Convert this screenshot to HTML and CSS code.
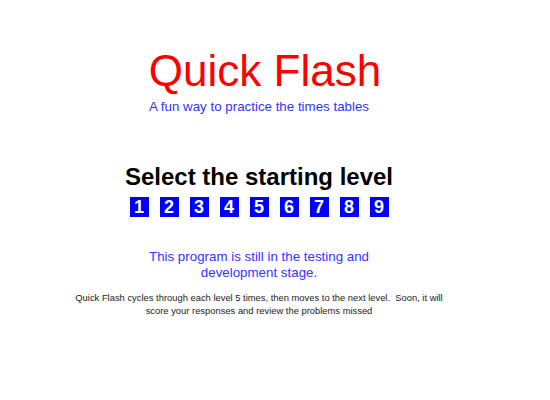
FILE: index.html
```html
<!DOCTYPE html>
<html>
<head>
<meta charset="utf-8">
<link rel="stylesheet" href="styles.css">
</head>
<body>
<div class="page">
  <h1 class="title">Quick Flash</h1>
  <p class="subtitle">A fun way to practice the times tables</p>
  <h2 class="select">Select the starting level</h2>
  <div class="levels">
    <span class="level">1</span>
    <span class="level">2</span>
    <span class="level">3</span>
    <span class="level">4</span>
    <span class="level">5</span>
    <span class="level">6</span>
    <span class="level">7</span>
    <span class="level">8</span>
    <span class="level">9</span>
  </div>
  <p class="notice">This program is still in the testing and development stage.</p>
  <p class="info">Quick Flash cycles through each level 5 times, then moves to the next level.&nbsp; Soon, it will score your responses and review the problems missed</p>
</div>
</body>
</html>
```
FILE: styles.css
```css
html, body {
  margin: 0;
  padding: 0;
  background: #ffffff;
}
.page {
  width: 518px;
  display: flex;
  flex-direction: column;
  align-items: center;
  text-align: center;
  font-family: "Liberation Sans", Arial, sans-serif;
  padding-top: 46px;
}
.title {
  margin: 0;
  padding-left: 12px;
  font-size: 44px;
  font-weight: normal;
  line-height: 50px;
  color: #ff0000;
}
.subtitle {
  margin: 3px 0 0;
  font-size: 13.33px;
  line-height: 16px;
  color: #3333ff;
}
.select {
  margin: 48px 0 0;
  font-size: 24px;
  font-weight: bold;
  line-height: 28px;
  color: #000000;
}
.levels {
  display: flex;
  gap: 11px;
  margin-top: 6px;
}
.level {
  display: block;
  width: 19px;
  height: 20px;
  line-height: 21px;
  background: #0000ff;
  color: #ffffff;
  font-size: 18px;
  font-weight: bold;
}
.notice {
  width: 236px;
  margin: 32px 0 0;
  font-size: 13.33px;
  line-height: 15.5px;
  color: #3333ff;
}
.info {
  width: 380px;
  margin: 12px 0 0;
  font-size: 9.4px;
  line-height: 12.5px;
  color: #222222;
}
```
